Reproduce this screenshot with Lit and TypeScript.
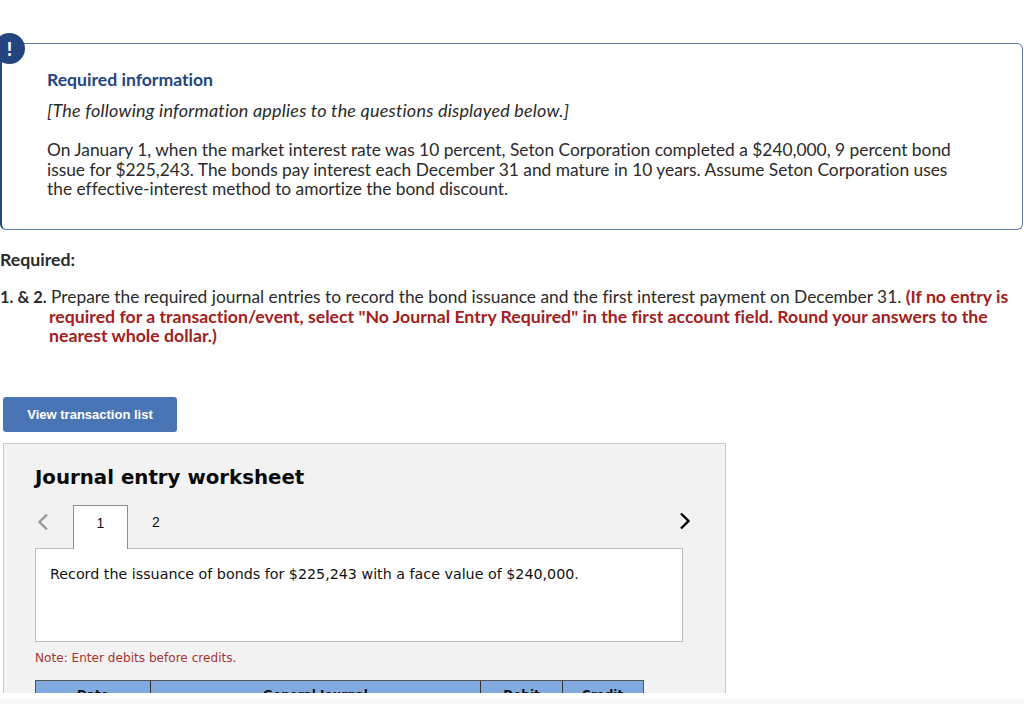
import { LitElement, html, css } from "lit";
import { customElement } from "lit/decorators.js";

@customElement("app-root")
export class AppRoot extends LitElement {
  static styles = css`
    :host { display: block; width: 1024px; height: 704px; overflow: hidden; background: #fff; position: relative; font-family: "Lato", "Liberation Sans", sans-serif; font-variant-ligatures: none; color: #2b2b2b; }
    .clip { height: 693px; overflow: hidden; padding-top: 43px; box-sizing: border-box; }
    .strip { height: 6px; margin-top: 5px; background: #f8f8f8; }
    .info { position: relative; box-sizing: border-box; height: 187px; margin-right: 1px; border: 1px solid #5f7cab; border-left: 2px solid #24457f; border-radius: 6px; padding: 26px 0 0 45px; font-size: 17.35px; line-height: 19.6px; }
    .badge { position: absolute; left: -8px; top: -11px; width: 31px; height: 31px; border-radius: 50%; background: #24457f; color: #fff; font-weight: 900; font-size: 19px; display: flex; align-items: center; justify-content: center; }
    .title { color: #24457f; font-weight: 700; font-size: 17.6px; }
    .lead { font-style: italic; margin-top: 11px; font-size: 18px; letter-spacing: 0.2px; }
    .body { margin-top: 20px; width: 912px; }
    .req { font-size: 17.7px; font-weight: 700; line-height: 20px; margin-top: 20px; }
    .q { font-size: 17.35px; line-height: 19.6px; margin-top: 17px; padding-left: 49px; text-indent: -49px; width: 965px; }
    .q b { font-weight: 700; font-size: 16.4px; line-height: 0; }
    .q .red { color: #a32020; font-weight: 700; font-size: 17.7px; line-height: 0; }
    .btn { box-sizing: border-box; width: 174px; height: 35px; margin: 51px 0 0 3px; background: #4a75b5; color: #fff; border-radius: 3px; font: 700 13px/35px "Liberation Sans", sans-serif; text-align: center; }
    .sheet { box-sizing: border-box; width: 723px; height: 300px; margin: 11px 0 0 3px; background: #f2f2f2; border: 1px solid #c8c8c8; padding: 22px 42px 0 31px; font-family: "DejaVu Sans", sans-serif; color: #111; }
    h2 { margin: 0; font: 700 19.8px/24px "DejaVu Sans", sans-serif; color: #0a0a0a; }
    .tabs { display: flex; align-items: flex-start; margin-top: 15px; height: 43px; position: relative; z-index: 1; }
    .prev { box-sizing: border-box; width: 38px; display: flex; padding: 8px 0 0 2px; }
    .tab { box-sizing: border-box; width: 55px; height: 44px; text-align: center; font: 14px/35px "Liberation Sans", sans-serif; }
    .tab.on { background: #fff; border: 1px solid #8c8c8c; border-bottom: 0; }
    .tab.off { padding-left: 1px; }
    .next { margin-left: auto; margin-right: -8px; display: flex; padding-top: 7px; }
    .panel { box-sizing: border-box; height: 94px; width: 648px; background: #fff; border: 1px solid #bdbdbd; padding: 16px 14px; font-size: 14.27px; line-height: 18px; }
    .note { color: #a83232; font-size: 12.1px; line-height: 15px; margin-top: 9px; }
    .head { display: grid; grid-template-columns: 114px 330px 82px 80px; width: 607px; margin-top: 14px; background: #82aae0; border: 1px solid #555; border-bottom: 0; font-weight: 700; font-size: 12px; }
    .head div { text-align: center; line-height: 22px; height: 24px; padding-top: 3px; box-sizing: border-box; border-left: 1px solid #333; }
    .head div:first-child { border-left: 0; }
  `;
  render() {
    return html`
      <div class="clip">
        <section class="info">
          <div class="badge">!</div>
          <div class="title">Required information</div>
          <div class="lead">[The following information applies to the questions displayed below.]</div>
          <div class="body">On January 1, when the market interest rate was 10 percent, Seton Corporation completed a $240,000, 9 percent bond issue for $225,243. The bonds pay interest each December 31 and mature in 10 years. Assume Seton Corporation uses the effective-interest method to amortize the bond discount.</div>
        </section>
        <div class="req">Required:</div>
        <div class="q"><b>1. &amp; 2.</b> Prepare the required journal entries to record the bond issuance and the first interest payment on December 31. <span class="red">(If no entry is required for a transaction/event, select "No Journal Entry Required" in the first account field. Round your answers to the nearest whole dollar.)</span></div>
        <div class="btn">View transaction list</div>
        <section class="sheet">
          <h2>Journal entry worksheet</h2>
          <div class="tabs">
            <div class="prev"><svg width="12" height="18" viewBox="0 0 12 18"><path d="M10 1.5 2.5 9l7.500 7.500" fill="none" stroke="#999" stroke-width="2.4"/></svg></div>
            <div class="tab on">1</div>
            <div class="tab off">2</div>
            <div class="next"><svg width="12" height="18" viewBox="0 0 12 18"><path d="M2 1.500 9.500 9 2 16.500" fill="none" stroke="#000" stroke-width="2.4"/></svg></div>
          </div>
          <div class="panel">Record the issuance of bonds for $225,243 with a face value of $240,000.</div>
          <div class="note">Note: Enter debits before credits.</div>
          <div class="head"><div>Date</div><div>General Journal</div><div>Debit</div><div>Credit</div></div>
        </section>
      </div>
      <div class="strip"></div>
    `;
  }
}
